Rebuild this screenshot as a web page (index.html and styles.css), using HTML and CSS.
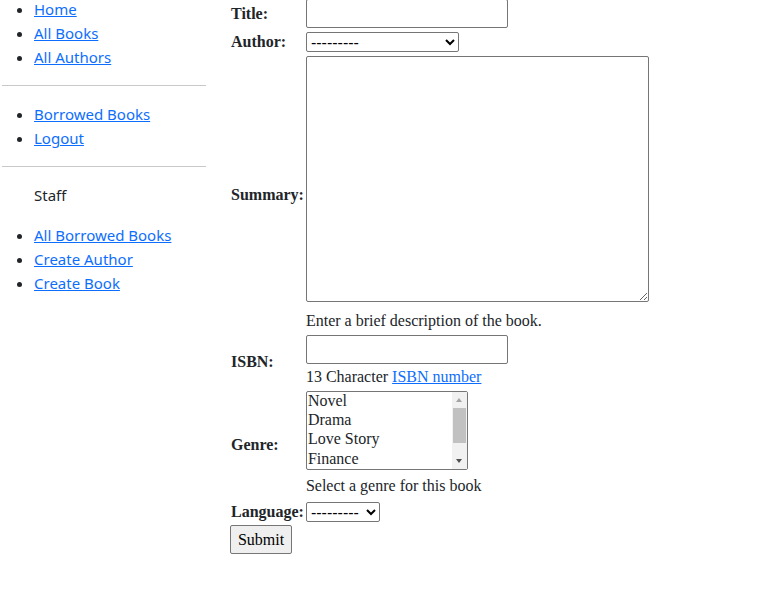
FILE: index.html
```html
<!DOCTYPE html>
<html lang="en">
<head>
<meta charset="utf-8">
<title>Create Book</title>
<link rel="stylesheet" href="styles.css">
</head>
<body>
<div class="page">
  <nav class="sidebar">
    <ul class="nav-list">
      <li><a href="#">Home</a></li>
      <li><a href="#">All Books</a></li>
      <li><a href="#">All Authors</a></li>
    </ul>
    <hr class="rule">
    <ul class="nav-list">
      <li><a href="#">Borrowed Books</a></li>
      <li><a href="#">Logout</a></li>
    </ul>
    <hr class="rule">
    <p class="staff">Staff</p>
    <ul class="nav-list">
      <li><a href="#">All Borrowed Books</a></li>
      <li><a href="#">Create Author</a></li>
      <li><a href="#">Create Book</a></li>
    </ul>
  </nav>
  <main class="content">
    <form class="book-form">
      <table class="form-table">
        <tr class="row-title">
          <th><label for="id_title">Title:</label></th>
          <td><input class="text-input" type="text" id="id_title"></td>
        </tr>
        <tr class="row-author">
          <th><label for="id_author">Author:</label></th>
          <td>
            <div class="line">
              <select class="select author-select" id="id_author"><option>---------</option></select>
            </div>
          </td>
        </tr>
        <tr class="row-summary">
          <th><label for="id_summary">Summary:</label></th>
          <td>
            <textarea class="summary" id="id_summary"></textarea>
            <div class="help help-summary">Enter a brief description of the book.</div>
          </td>
        </tr>
        <tr class="row-isbn">
          <th><label for="id_isbn">ISBN:</label></th>
          <td>
            <input class="text-input" type="text" id="id_isbn">
            <div class="help help-isbn">13 Character <a href="#">ISBN number</a></div>
          </td>
        </tr>
        <tr class="row-genre">
          <th><label for="id_genre">Genre:</label></th>
          <td>
            <div class="genre-box">
              <select class="genre" id="id_genre" multiple size="4">
                <option>Novel</option>
                <option>Drama</option>
                <option>Love Story</option>
                <option>Finance</option>
                <option>Science Fiction</option>
                <option>Fantasy</option>
              </select>
              <div class="scrollbar" aria-hidden="true">
                <span class="arrow arrow-up"></span>
                <span class="thumb"></span>
                <span class="arrow arrow-down"></span>
              </div>
            </div>
            <div class="help help-genre">Select a genre for this book</div>
          </td>
        </tr>
        <tr class="row-language">
          <th><label for="id_language">Language:</label></th>
          <td>
            <div class="line">
              <select class="select language-select" id="id_language"><option>---------</option></select>
            </div>
          </td>
        </tr>
      </table>
      <button class="submit" type="submit">Submit</button>
    </form>
  </main>
</div>
</body>
</html>
```
FILE: styles.css
```css
html, body {
  margin: 0;
  padding: 0;
  background: #ffffff;
}

body {
  font-family: "Noto Sans", "Open Sans", sans-serif;
  color: #212529;
}

.page {
  display: flex;
  align-items: flex-start;
}

.sidebar {
  width: 204px;
  margin-left: 2px;
  margin-top: -3px;
  flex: none;
  font-size: 15px;
  line-height: 24px;
}

.nav-list {
  margin: 0;
  padding-left: 32px;
}

.nav-list li {
  line-height: 24px;
}

.nav-list a {
  color: #0d6efd;
  text-decoration: underline;
}

.rule {
  border: 0;
  border-top: 1px solid #c8c9ca;
  margin: 16px 0 16px 0;
  height: 0;
}

.staff {
  margin: 0 0 16px 32px;
  line-height: 24px;
}

.content {
  margin-left: 24px;
  margin-top: -2px;
  font-family: "Liberation Serif", "Times New Roman", serif;
  font-size: 16px;
  color: #212529;
}

.form-table {
  border-collapse: collapse;
}

.form-table th {
  text-align: left;
  font-weight: bold;
  padding: 1px;
  vertical-align: middle;
  line-height: 24px;
  white-space: nowrap;
}

.form-table td {
  padding: 1px;
  vertical-align: middle;
}

.text-input {
  display: block;
  box-sizing: border-box;
  width: 202px;
  height: 29px;
  margin: 0;
  border: 1px solid #767676;
  border-radius: 2px;
  padding: 1px 2px;
  font-family: "Liberation Serif", serif;
  font-size: 16px;
  background: #fff;
}

.line {
  height: 24px;
  display: flex;
  align-items: center;
}

.select {
  box-sizing: border-box;
  height: 20px;
  margin: 0;
  padding: 0;
  border: 1px solid #767676;
  border-radius: 2px;
  font-family: "Liberation Sans", Arial, sans-serif;
  font-size: 16px;
  line-height: 18px;
  color: #000;
  background: #fff;
}

.author-select {
  width: 153px;
}

.language-select {
  width: 74px;
}

.summary {
  display: block;
  box-sizing: border-box;
  width: 343px;
  height: 246px;
  margin: 0;
  border: 1px solid #767676;
  border-radius: 2px;
  padding: 2px;
  font-family: "Liberation Mono", monospace;
  font-size: 13px;
  background: #fff;
}

.help {
  line-height: 24px;
  color: #212529;
}

.help a {
  color: #0d6efd;
  text-decoration: underline;
}

.help-summary {
  margin-top: 7px;
}

.help-isbn {
  margin-top: 1px;
}

.genre-box {
  position: relative;
  width: 162px;
  height: 79px;
}

.genre {
  display: block;
  box-sizing: border-box;
  width: 162px;
  height: 79px;
  margin: 0;
  border: 1px solid #767676;
  border-radius: 2px;
  padding: 0;
  font-family: "Liberation Serif", serif;
  font-size: 16px;
  line-height: 19px;
  color: #212529;
  background: #fff;
  overflow: hidden;
}

.genre option {
  padding: 0 1px;
  line-height: 19px;
}

.scrollbar {
  position: absolute;
  top: 1px;
  right: 1px;
  bottom: 1px;
  width: 15px;
  background: #f1f1f1;
}

.thumb {
  position: absolute;
  left: 1px;
  right: 1px;
  top: 16px;
  height: 35px;
  background: #c1c1c1;
}

.arrow {
  position: absolute;
  left: 4px;
  width: 0;
  height: 0;
  border-left: 3.5px solid transparent;
  border-right: 3.5px solid transparent;
}

.arrow-up {
  top: 6px;
  border-bottom: 4px solid #a3a3a3;
}

.arrow-down {
  bottom: 6px;
  border-top: 4px solid #505050;
}

.help-genre {
  margin-top: 4px;
}

.submit {
  display: block;
  box-sizing: border-box;
  margin: 0;
  width: 62px;
  height: 29px;
  padding: 0 6px;
  border: 1px solid #767676;
  border-radius: 2px;
  background: #efefef;
  font-family: "Liberation Serif", serif;
  font-size: 16px;
  color: #000;
}
```
